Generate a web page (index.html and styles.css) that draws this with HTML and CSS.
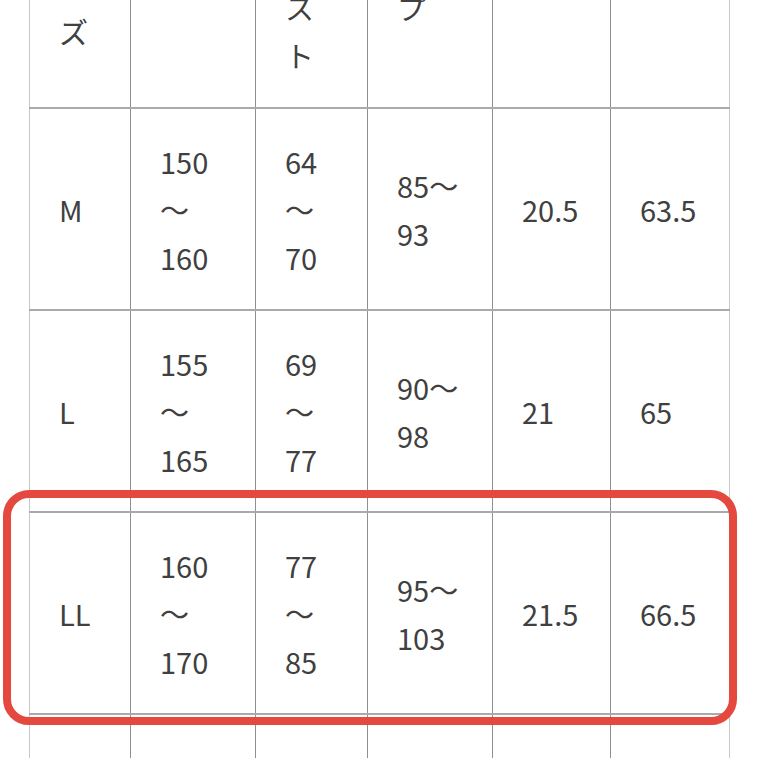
FILE: index.html
```html
<!DOCTYPE html>
<html lang="ja">
<head>
<meta charset="utf-8">
<link rel="stylesheet" href="styles.css">
</head>
<body>
<div class="page">
  <table class="size-table">
    <colgroup>
      <col class="c1"><col class="c2"><col class="c3"><col class="c4"><col class="c5"><col class="c6">
    </colgroup>
    <tr>
      <td>サイズ</td><td>身長</td><td>ウエスト</td><td>ヒップ</td><td>股上</td><td>股下</td>
    </tr>
    <tr>
      <td>M</td><td>150～160</td><td>64～70</td><td>85～93</td><td>20.5</td><td>63.5</td>
    </tr>
    <tr>
      <td>L</td><td>155～165</td><td>69～77</td><td>90～98</td><td>21</td><td>65</td>
    </tr>
    <tr>
      <td>LL</td><td>160～170</td><td>77～85</td><td>95～103</td><td>21.5</td><td>66.5</td>
    </tr>
    <tr>
      <td>3L</td><td>165～175</td><td>85～93</td><td>100～108</td><td>22</td><td>68</td>
    </tr>
  </table>
  <div class="highlight"></div>
</div>
</body>
</html>
```
FILE: styles.css
```css
html, body {
  margin: 0;
  padding: 0;
  background: #ffffff;
}
.page {
  position: relative;
  width: 758px;
  height: 758px;
  overflow: hidden;
}
.size-table {
  margin-top: -141px;
  margin-left: 29px;
  width: 700px;
  table-layout: fixed;
  border-collapse: collapse;
  font-family: "Noto Sans CJK JP", "Noto Sans", sans-serif;
  font-size: 29px;
  line-height: 48px;
  color: #404040;
  border-left: 1px solid #c9c9c9;
  border-right: 1px solid #c9c9c9;
}
.c1 { width: 101px; }
.c2 { width: 125px; }
.c3 { width: 112px; }
.c4 { width: 125px; }
.c5 { width: 118px; }
.c6 { width: 119px; }
.size-table td {
  padding: 28px 30px 28px 29px;
  vertical-align: middle;
  text-align: left;
  border-bottom: 2px solid #a9a9ae;
  border-right: 1px solid #8f8f8f;
}
.size-table td:first-child {
  border-left: 1px solid #c9c9c9;
}
.size-table td:last-child {
  border-right: 1px solid #c9c9c9;
}
.highlight {
  position: absolute;
  left: 3px;
  top: 490px;
  width: 718px;
  height: 219px;
  border: 8px solid #e4483e;
  border-radius: 26px;
}
```
